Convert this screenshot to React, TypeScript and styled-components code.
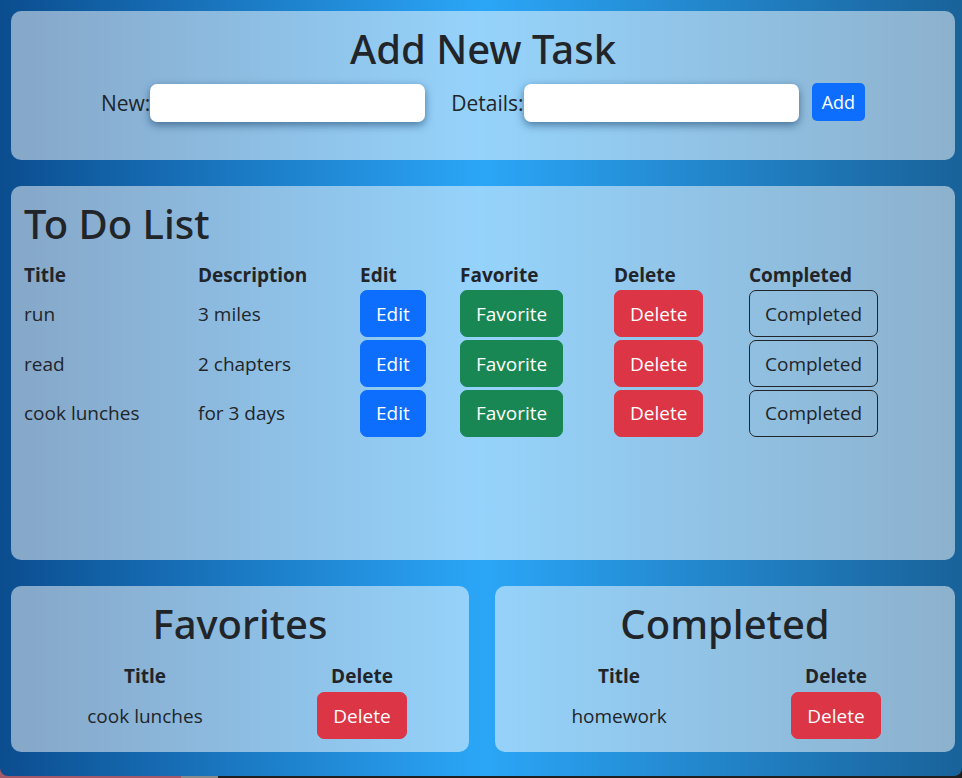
import React from "react";
import styled, { createGlobalStyle } from "styled-components";

const GlobalStyle = createGlobalStyle`
  html, body {
    margin: 0;
    padding: 0;
  }
  body {
    background: linear-gradient(90deg, #a4596a 0 181px, #8a8a8a 181px 218px, #1f1f1f 218px);
    font-family: "Open Sans", "Noto Sans", sans-serif;
    color: #212529;
    min-height: 778px;
  }
  * { box-sizing: border-box; }
`;

const Page = styled.div`
  height: 776px;
  background: linear-gradient(90deg, #0b4d8f 0%, #2ba6f7 50%, #19629a 100%);
  border-radius: 0 0 8px 8px;
  padding: 11px 7px 0 11px;
  display: flex;
  flex-direction: column;
  gap: 26px;
`;

const Card = styled.section<{ $minHeight?: number; $padX?: number }>`
  background: rgba(255, 255, 255, 0.5);
  border-radius: 10px;
  padding: 14px ${(p) => p.$padX ?? 13}px 11px;
  min-height: ${(p) => (p.$minHeight ? `${p.$minHeight}px` : "auto")};
`;

const Heading = styled.h1<{ $align?: string }>`
  margin: 0;
  font-family: "Noto Sans", "Open Sans", sans-serif;
  font-size: 40px;
  font-weight: 500;
  line-height: 48px;
  text-align: ${(p) => p.$align ?? "center"};
`;

const FormRow = styled.div`
  display: flex;
  justify-content: center;
  align-items: center;
  margin-top: 11px;
  margin-bottom: 27px;
  font-size: 21px;
`;

const Label = styled.label<{ $gapBefore?: number }>`
  display: flex;
  align-items: center;
  margin-left: ${(p) => p.$gapBefore ?? 0}px;
`;

const TextInput = styled.input`
  width: 275px;
  height: 38px;
  border: none;
  border-radius: 7px;
  background: #fff;
  box-shadow: 0 3px 8px rgba(10, 50, 90, 0.55);
  outline: none;
`;

const SmallButton = styled.button`
  margin-left: 13px;
  height: 38px;
  padding: 0 10px;
  border: none;
  border-radius: 5px;
  background: #0d6efd;
  color: #fff;
  font-family: inherit;
  font-size: 18px;
  margin-top: -2px;
`;

const TodoGrid = styled.div`
  display: grid;
  grid-template-columns: 174px 162px 100px 154px 135px 1fr;
  grid-template-rows: 28px repeat(3, 49.75px);
  align-items: center;
  margin-top: 13px;
  font-size: 19px;
`;

const HeadCell = styled.div<{ $center?: boolean }>`
  font-weight: 700;
  line-height: 27px;
  align-self: end;
  text-align: ${(p) => (p.$center ? "center" : "left")};
`;

const Cell = styled.div<{ $center?: boolean }>`
  line-height: 27px;
  padding-top: 1px;
  text-align: ${(p) => (p.$center ? "center" : "left")};
`;

const ButtonCell = styled.div<{ $center?: boolean }>`
  display: flex;
  justify-content: ${(p) => (p.$center ? "center" : "flex-start")};
`;

const variants: Record<string, { bg: string; fg: string; border: string }> = {
  primary: { bg: "#0d6efd", fg: "#fff", border: "#0d6efd" },
  success: { bg: "#198754", fg: "#fff", border: "#198754" },
  danger: { bg: "#dc3545", fg: "#fff", border: "#dc3545" },
  outline: { bg: "transparent", fg: "#212529", border: "#212529" },
};

const ActionButton = styled.button<{ $variant: string }>`
  height: 47px;
  padding: 0 15px;
  border-radius: 7px;
  border: 1px solid ${(p) => variants[p.$variant].border};
  background: ${(p) => variants[p.$variant].bg};
  color: ${(p) => variants[p.$variant].fg};
  font-family: inherit;
  font-size: 19px;
  cursor: pointer;
`;

const BottomRow = styled.div`
  display: grid;
  grid-template-columns: 458px 460px;
  gap: 26px;
`;

const MiniGrid = styled.div<{ $cols: string }>`
  display: grid;
  grid-template-columns: ${(p) => p.$cols};
  grid-template-rows: 29px 51px;
  justify-content: center;
  align-items: center;
  margin-top: 13px;
  font-size: 19px;
`;

const todos = [
  { title: "run", desc: "3 miles" },
  { title: "read", desc: "2 chapters" },
  { title: "cook lunches", desc: "for 3 days" },
];

export default function App() {
  return (
    <>
      <GlobalStyle />
      <Page>
        <Card>
          <Heading>Add New Task</Heading>
          <FormRow>
            <Label>
              New:
              <TextInput />
            </Label>
            <Label $gapBefore={26}>
              Details:
              <TextInput />
            </Label>
            <SmallButton>Add</SmallButton>
          </FormRow>
        </Card>

        <Card $minHeight={374}>
          <Heading $align="left">To Do List</Heading>
          <TodoGrid>
            <HeadCell>Title</HeadCell>
            <HeadCell>Description</HeadCell>
            <HeadCell>Edit</HeadCell>
            <HeadCell>Favorite</HeadCell>
            <HeadCell>Delete</HeadCell>
            <HeadCell>Completed</HeadCell>
            {todos.map((t) => (
              <React.Fragment key={t.title}>
                <Cell>{t.title}</Cell>
                <Cell>{t.desc}</Cell>
                <ButtonCell>
                  <ActionButton $variant="primary">Edit</ActionButton>
                </ButtonCell>
                <ButtonCell>
                  <ActionButton $variant="success">Favorite</ActionButton>
                </ButtonCell>
                <ButtonCell>
                  <ActionButton $variant="danger">Delete</ActionButton>
                </ButtonCell>
                <ButtonCell>
                  <ActionButton $variant="outline">Completed</ActionButton>
                </ButtonCell>
              </React.Fragment>
            ))}
          </TodoGrid>
        </Card>

        <BottomRow>
          <Card $padX={0}>
            <Heading>Favorites</Heading>
            <MiniGrid $cols="244px 190px">
              <HeadCell $center>Title</HeadCell>
              <HeadCell $center>Delete</HeadCell>
              <Cell $center>cook lunches</Cell>
              <ButtonCell $center>
                <ActionButton $variant="danger">Delete</ActionButton>
              </ButtonCell>
            </MiniGrid>
          </Card>
          <Card $padX={0}>
            <Heading>Completed</Heading>
            <MiniGrid $cols="222px 212px">
              <HeadCell $center>Title</HeadCell>
              <HeadCell $center>Delete</HeadCell>
              <Cell $center>homework</Cell>
              <ButtonCell $center>
                <ActionButton $variant="danger">Delete</ActionButton>
              </ButtonCell>
            </MiniGrid>
          </Card>
        </BottomRow>
      </Page>
    </>
  );
}
